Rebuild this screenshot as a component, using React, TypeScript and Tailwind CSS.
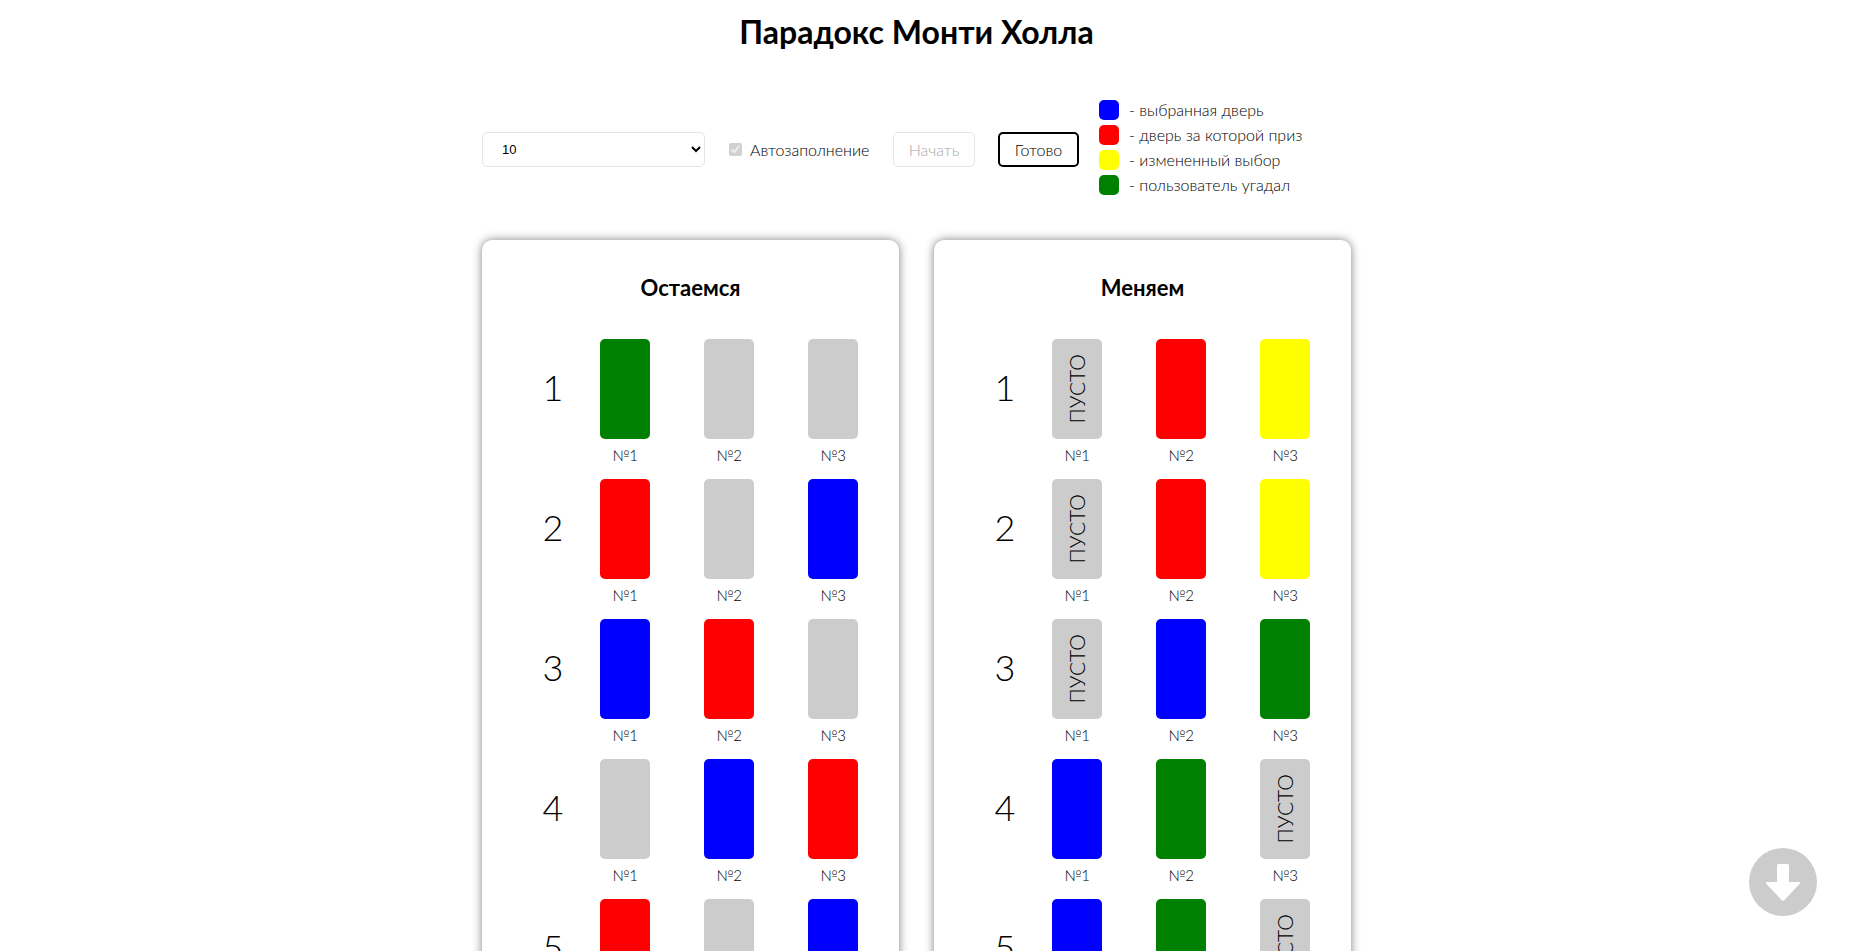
type DoorState = "closed" | "picked" | "prize" | "changed" | "won" | "empty";

interface Round {
  doors: [DoorState, DoorState, DoorState];
}

const doorColors: Record<DoorState, string> = {
  closed: "bg-[#ccc]",
  empty: "bg-[#ccc]",
  picked: "bg-[#00f]",
  prize: "bg-[#f00]",
  changed: "bg-[#ff0]",
  won: "bg-[#008000]",
};

const legend: { state: DoorState; text: string }[] = [
  { state: "picked", text: "- выбранная дверь" },
  { state: "prize", text: "- дверь за которой приз" },
  { state: "changed", text: "- измененный выбор" },
  { state: "won", text: "- пользователь угадал" },
];

const stayRounds: Round[] = [
  { doors: ["won", "closed", "closed"] },
  { doors: ["prize", "closed", "picked"] },
  { doors: ["picked", "prize", "closed"] },
  { doors: ["closed", "picked", "prize"] },
  { doors: ["prize", "closed", "picked"] },
];

const switchRounds: Round[] = [
  { doors: ["empty", "prize", "changed"] },
  { doors: ["empty", "prize", "changed"] },
  { doors: ["empty", "picked", "won"] },
  { doors: ["picked", "won", "empty"] },
  { doors: ["picked", "won", "empty"] },
];

function Door({ state, index }: { state: DoorState; index: number }) {
  return (
    <div className="flex w-[50px] flex-col items-center">
      <div className={`flex h-[100px] w-full items-center justify-center rounded-[5px] ${doorColors[state]}`}>
        {state === "empty" && (
          <span className="rotate-180 text-[21px] leading-6 [writing-mode:vertical-rl]">ПУСТО</span>
        )}
      </div>
      <span className="mt-1 text-[15px] leading-6">№{index}</span>
    </div>
  );
}

function Panel({ title, rounds }: { title: string; rounds: Round[] }) {
  return (
    <section className="flex-1 rounded-[10px] bg-white pt-8 pb-8 shadow-[0_0_10px_rgba(0,0,0,0.5)]">
      <h2 className="text-center text-[22px] leading-8 font-bold">{title}</h2>
      <ol className="mt-[35px] flex flex-col gap-3">
        {rounds.map((round, i) => (
          <li key={i} className="flex pl-12">
            <span className="flex h-24 w-[46px] items-center justify-center text-[36px] leading-10">{i + 1}</span>
            <div className="ml-6 flex gap-[54px]">
              {round.doors.map((state, d) => (
                <Door key={d} state={state} index={d + 1} />
              ))}
            </div>
          </li>
        ))}
      </ol>
    </section>
  );
}

export default function App() {
  return (
    <div className="min-h-screen bg-white pr-[26px] font-['Lato',sans-serif] font-light text-black">
      <main className="mx-auto flex max-w-[869px] flex-col pb-10">
        <h1 className="pt-3 text-center text-[32px] leading-10 font-bold">Парадокс Монти Холла</h1>

        <div className="mt-12 flex items-start">
          <div className="mt-8 flex items-center">
            <select
              aria-label="Количество попыток"
              defaultValue="10"
              className="h-[35px] w-[223px] rounded-[5px] border border-[#e5e5e5] bg-white pl-[15px] font-['Liberation_Sans',Arial,sans-serif] text-[13px] font-normal"
            >
              <option value="10">10</option>
              <option value="50">50</option>
              <option value="100">100</option>
            </select>
            <label className="ml-6 flex w-[164px] items-center gap-2 text-base whitespace-nowrap">
              <input type="checkbox" defaultChecked disabled className="size-[13px]" />
              Автозаполнение
            </label>
            <button
              type="button"
              disabled
              className="h-[35px] w-[82px] rounded-[5px] border border-[#e5e5e5] text-base text-[#aaa]"
            >
              Начать
            </button>
            <button type="button" className="ml-[23px] h-[35px] w-[81px] rounded-[5px] border-2 border-black text-base">
              Готово
            </button>
          </div>
          <ul className="ml-5 flex flex-col gap-[5px]">
            {legend.map((item) => (
              <li key={item.state} className="flex items-center gap-2.5 text-base leading-5 whitespace-nowrap">
                <span className={`size-5 rounded-[5px] ${doorColors[item.state]}`} />
                {item.text}
              </li>
            ))}
          </ul>
        </div>

        <div className="mt-[45px] flex gap-[35px]">
          <Panel title="Остаемся" rounds={stayRounds} />
          <Panel title="Меняем" rounds={switchRounds} />
        </div>
      </main>

      <a
        href="#bottom"
        aria-label="Вниз"
        className="fixed right-[42px] bottom-[35px] flex size-[68px] items-center justify-center rounded-full bg-[#ccc]"
      >
        <svg viewBox="0 0 68 68" className="size-[68px]" fill="#fff">
          <path d="M29.5 16h9q1.500 0 1.500 1.500V34h10q1.800.2.700 1.700L35 52.400q-1 .9-2 0L17.300 35.700Q16.200 34.200 18 34h10V17.500q0-1.500 1.500-1.500z" />
        </svg>
      </a>
      <div id="bottom" />
    </div>
  );
}
